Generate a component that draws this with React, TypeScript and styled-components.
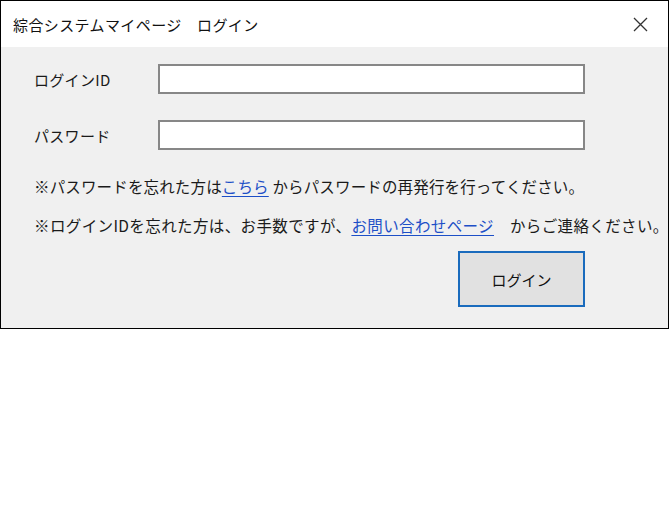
import React, { useState } from 'react';
import styled, { createGlobalStyle } from 'styled-components';

const GlobalStyle = createGlobalStyle`
  html, body {
    margin: 0;
    padding: 0;
    background: #ffffff;
  }
  body {
    font-family: "Noto Sans CJK JP", "Noto Sans", sans-serif;
    color: #1a1a1a;
  }
`;

const Window = styled.div`
  width: 669px;
  height: 329px;
  box-sizing: border-box;
  border: 1px solid #000;
  display: flex;
  flex-direction: column;
  background: #f0f0f0;
  overflow: hidden;
`;

const TitleBar = styled.div`
  height: 46px;
  flex-shrink: 0;
  background: #ffffff;
  display: flex;
  align-items: center;
  justify-content: space-between;
  padding: 0 16px 0 12px;
`;

const Title = styled.span`
  font-size: 15px;
  color: #111;
  letter-spacing: 0.4px;
`;

const CloseButton = styled.button`
  width: 24px;
  height: 24px;
  border: none;
  background: transparent;
  padding: 0;
  display: flex;
  align-items: center;
  justify-content: center;
  color: #333;
  cursor: pointer;
`;

const Body = styled.div`
  flex: 1;
  padding: 17px 0 0 33px;
  display: flex;
  flex-direction: column;
`;

const Form = styled.div`
  display: grid;
  grid-template-columns: 124px 427px;
  row-gap: 26px;
  align-items: center;
`;

const Label = styled.label`
  font-size: 15px;
  color: #1a1a1a;
  letter-spacing: 0.3px;
`;

const Input = styled.input`
  height: 30px;
  box-sizing: border-box;
  border: 2px solid #878787;
  background: #fff;
  padding: 0 6px;
  font-size: 15px;
  outline: none;
`;

const Notes = styled.div`
  margin-top: 17px;
  font-size: 15.5px;
  line-height: 39px;
  white-space: nowrap;
  color: #1a1a1a;
`;

const NoteLine = styled.div<{ $tracking: number }>`
  letter-spacing: ${({ $tracking }) => $tracking}px;
`;

const Link = styled.a`
  color: #1d4fc7;
  text-decoration: underline;
  text-underline-offset: 3px;
`;

const Actions = styled.div`
  width: 551px;
  display: flex;
  justify-content: flex-end;
  margin-top: 6px;
`;

const LoginButton = styled.button`
  width: 127px;
  height: 56px;
  box-sizing: border-box;
  border: 2px solid #1a6bbd;
  background: #e1e1e1;
  font-family: "Noto Sans CJK JP", sans-serif;
  font-size: 15px;
  color: #111;
  cursor: pointer;
`;

export default function App() {
  const [loginId, setLoginId] = useState('');
  const [password, setPassword] = useState('');

  return (
    <>
      <GlobalStyle />
      <Window>
        <TitleBar>
          <Title>綜合システムマイページ　ログイン</Title>
          <CloseButton aria-label="閉じる">
            <svg width="15" height="15" viewBox="0 0 15 15">
              <path d="M1 1 L14 14 M14 1 L1 14" stroke="currentColor" strokeWidth="1.3" fill="none" />
            </svg>
          </CloseButton>
        </TitleBar>
        <Body>
          <Form>
            <Label>ログインID</Label>
            <Input value={loginId} onChange={(e) => setLoginId(e.target.value)} />
            <Label>パスワード</Label>
            <Input type="password" value={password} onChange={(e) => setPassword(e.target.value)} />
          </Form>
          <Notes>
            <NoteLine $tracking={0.15}>
              ※パスワードを忘れた方は<Link href="#">こちら</Link> からパスワードの再発行を行ってください。
            </NoteLine>
            <NoteLine $tracking={0.38}>
              ※ログインIDを忘れた方は、お手数ですが、<Link href="#">お問い合わせページ</Link>　からご連絡ください。
            </NoteLine>
          </Notes>
          <Actions>
            <LoginButton>ログイン</LoginButton>
          </Actions>
        </Body>
      </Window>
    </>
  );
}
